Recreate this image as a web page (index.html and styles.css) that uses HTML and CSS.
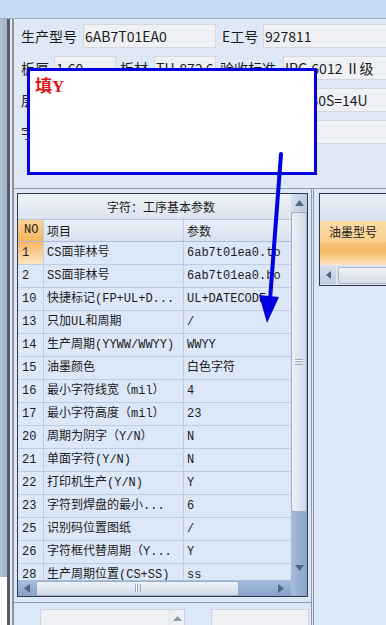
FILE: index.html
```html
<!doctype html>
<html>
  <head>
    <meta charset="utf-8">
    <title>字符工序参数</title>
    <link rel="stylesheet" href="styles.css">
  </head>
  <body>

    <div id="topbar"></div>

    <div id="main">
      <div id="side">
        <div class="side-panel"></div>
        <div class="side-dark"></div>
        <div class="side-light"></div>
      </div>

      <div id="content">
        <div id="form">
          <div class="frow">
            <span class="lbl w62">生产型号</span>
            <div class="tbox w133">6AB7T01EA0</div>
            <span class="lbl w47 pl6">E工号</span>
            <div class="tbox grow">927811</div>
          </div>
          <div class="frow">
            <span class="lbl w33">板厚</span>
            <div class="tbox w62">1.60</div>
            <span class="lbl w38 pl4">板材</span>
            <div class="tbox w62">TU-872 6</div>
            <span class="lbl w67 pl4">验收标准</span>
            <div class="tbox grow">IPC-6012 Ⅱ级</div>
          </div>
          <div class="frow">
            <span class="lbl w33">层数</span>
            <div class="tbox w62">4</div>
            <span class="lbl w38 pl4">铜厚</span>
            <div class="tbox w62">1OZ</div>
            <span class="lbl w67 pl4">字符规格</span>
            <div class="tbox grow">WL/30S=14U</div>
          </div>
          <div class="frow">
            <span class="lbl w33">字符</span>
            <div class="tbox grow"></div>
          </div>
        </div>

        <div id="lower">
          <div id="leftcol">
            <div class="grid-area">
              <div class="grid">
                <div class="grid-main">
                  <div class="g-caption">字符：工序基本参数</div>
                  <div class="g-body">
                    <div class="g-row g-head">
                      <div class="c-no">NO</div><div class="c-item">项目</div><div class="c-val">参数</div>
                    </div>
                    <div class="g-row">
                      <div class="c-no cur">1</div><div class="c-item">CS面菲林号</div><div class="c-val">6ab7t01ea0.to</div>
                    </div>
                    <div class="g-row">
                      <div class="c-no">2</div><div class="c-item">SS面菲林号</div><div class="c-val">6ab7t01ea0.bo</div>
                    </div>
                    <div class="g-row">
                      <div class="c-no">10</div><div class="c-item">快捷标记(FP+UL+D...</div><div class="c-val">UL+DATECODE</div>
                    </div>
                    <div class="g-row">
                      <div class="c-no">13</div><div class="c-item">只加UL和周期</div><div class="c-val">/</div>
                    </div>
                    <div class="g-row">
                      <div class="c-no">14</div><div class="c-item">生产周期(YYWW/WWYY)</div><div class="c-val">WWYY</div>
                    </div>
                    <div class="g-row">
                      <div class="c-no">15</div><div class="c-item">油墨颜色</div><div class="c-val">白色字符</div>
                    </div>
                    <div class="g-row">
                      <div class="c-no">16</div><div class="c-item">最小字符线宽（mil）</div><div class="c-val">4</div>
                    </div>
                    <div class="g-row">
                      <div class="c-no">17</div><div class="c-item">最小字符高度（mil）</div><div class="c-val">23</div>
                    </div>
                    <div class="g-row">
                      <div class="c-no">20</div><div class="c-item">周期为阴字（Y/N）</div><div class="c-val">N</div>
                    </div>
                    <div class="g-row">
                      <div class="c-no">21</div><div class="c-item">单面字符(Y/N)</div><div class="c-val">N</div>
                    </div>
                    <div class="g-row">
                      <div class="c-no">22</div><div class="c-item">打印机生产(Y/N)</div><div class="c-val">Y</div>
                    </div>
                    <div class="g-row">
                      <div class="c-no">23</div><div class="c-item">字符到焊盘的最小...</div><div class="c-val">6</div>
                    </div>
                    <div class="g-row">
                      <div class="c-no">25</div><div class="c-item">识别码位置图纸</div><div class="c-val">/</div>
                    </div>
                    <div class="g-row">
                      <div class="c-no">26</div><div class="c-item">字符框代替周期（Y...</div><div class="c-val">Y</div>
                    </div>
                    <div class="g-row">
                      <div class="c-no">28</div><div class="c-item">生产周期位置(CS+SS)</div><div class="c-val">ss</div>
                    </div>
                  </div>
                  <div class="hscroll">
                    <div class="hs-btn"><svg width="6" height="9"><polygon points="6,0 0,4.5 6,9" fill="#4f6584"/></svg></div>
                    <div class="hs-thumb"><span class="grip-v"></span></div>
                    <div class="hs-btn hs-right"><svg width="6" height="9"><polygon points="0,0 6,4.5 0,9" fill="#4f6584"/></svg></div>
                  </div>
                </div>
                <div class="vscroll">
                  <div class="vs-btn"><svg width="9" height="6"><polygon points="0,6 4.5,0 9,6" fill="#4f6584"/></svg></div>
                  <div class="vs-thumb"><span class="grip-h"></span></div>
                  <div class="vs-track"><svg width="9" height="6"><polygon points="0,0 9,0 4.5,6" fill="#4f6584"/></svg></div>
                </div>
              </div>
            </div>
            <div class="bottom-panel">
              <div class="tbox-lo w145">
                <div class="lo-btn"><svg width="9" height="5"><polygon points="0,5 4.5,0 9,5" fill="#8a98ac"/></svg></div>
              </div>
              <div class="tbox-lo w98 ml26"></div>
            </div>
          </div>

          <div id="rightcol">
            <div class="ink-box">
              <div class="ink-cap"></div>
              <div class="ink-head">油墨型号</div>
              <div class="ink-row"></div>
              <div class="ink-scroll">
                <div class="ink-btn"><svg width="5" height="8"><polygon points="5,0 0,4 5,8" fill="#4f6584"/></svg></div>
                <div class="ink-thumb"></div>
              </div>
            </div>
          </div>
        </div>
      </div>
    </div>

    <!-- note pasted over the form -->
    <div class="note"><span class="note-text">填Y</span></div>

    <svg class="arrow" width="386" height="625">
      <line x1="281" y1="154" x2="270" y2="300" stroke="#0000e0" stroke-width="4" stroke-linecap="round"/>
      <polygon points="259,295 279,297 267,323" fill="#0000e0"/>
    </svg>

  </body>
</html>
```

FILE: styles.css
```css
* { margin: 0; padding: 0; box-sizing: border-box; }
body { width: 386px; height: 625px; overflow: hidden; position: relative; background: #dce8f8; font: 14px "Noto Sans CJK SC", sans-serif; color: #1b1b1b; }

#topbar { height: 19px; background: #c7dcf4; border-bottom: 1px solid #9eabbd; }
#main { display: flex; height: 606px; }

#side { width: 12px; flex: none; display: flex; background: #fff; }
.side-panel { width: 7px; height: 558px; background: linear-gradient(to right, #b4c2d5, #a2b2c8); }
.side-dark { width: 3px; background: #555c66; }
.side-light { width: 2px; background: #e9ecf0; }

#content { flex: 1; min-width: 0; display: flex; flex-direction: column; border-left: 2px solid #8a929e; }

/* form at the top */
#form { flex: none; height: 169px; padding: 5px 0 0 7px; background: #dfe9f6; overflow: hidden; }
.frow { display: flex; height: 24px; margin-bottom: 8px; }
.lbl { flex: none; line-height: 24px; white-space: nowrap; }
.tbox { flex: none; height: 24px; border: 1px solid #d3d9e2; background: #eef0f3; padding-left: 1px; line-height: 22px; white-space: nowrap; overflow: hidden; }
.grow { flex: 1; margin-right: -3px; }
.w33 { width: 33px; }
.w38 { width: 38px; }
.w47 { width: 47px; }
.w62 { width: 62px; }
.w67 { width: 67px; }
.w133 { width: 133px; }
.pl4 { padding-left: 4px; }
.pl6 { padding-left: 6px; }

/* lower part: grid and side box */
#lower { flex: 1; min-height: 0; display: flex; border-top: 1px solid #8f99a8; }
#leftcol { width: 297px; flex: none; display: flex; flex-direction: column; }
.grid-area { flex: none; padding: 4px 3px 5px 3px; }
.grid { height: 404px; display: flex; border: 1px solid #2e3a4e; background: #dce8f8; }
.grid-main { width: 273px; display: flex; flex-direction: column; }
.g-caption { flex: none; height: 26px; border-bottom: 1px solid #b5c4d8; background: linear-gradient(#eef2f8, #dce4ef); font-size: 12px; line-height: 25px; padding-left: 89px; white-space: nowrap; }
.g-body { flex: 1; min-height: 0; overflow: hidden; }
.g-row { display: flex; height: 23px; border-bottom: 1px solid #bdcde2; font: 12px/22px "Liberation Mono", "Noto Sans CJK SC", monospace; white-space: nowrap; }
.c-no { flex: none; width: 26px; padding-left: 4px; border-right: 1px solid #bdcde2; }
.c-item { flex: none; width: 140px; padding-left: 3px; border-right: 1px solid #bdcde2; overflow: hidden; }
.c-val { flex: none; width: 200px; padding-left: 3px; }
.g-head { height: 22px; line-height: 21px; background: linear-gradient(#eaf0f8, #d7e1ee); border-bottom-color: #aebfd5; }
.g-head .c-no { background: linear-gradient(#fcd699, #f4b55c); padding-left: 6px; }
.g-head .c-item, .g-head .c-val { font-family: "Noto Sans CJK SC", sans-serif; }
.c-no.cur { background: linear-gradient(#f6b665, #fde4c0); }

.vscroll { width: 16px; display: flex; flex-direction: column; background: linear-gradient(to right, #a8bddc, #86a1ca); }
.vs-btn { height: 18px; display: flex; align-items: center; justify-content: center; background: linear-gradient(to right, #d6e0ee, #b9c9df); }
.vs-thumb { height: 300px; display: flex; align-items: center; justify-content: center; border: 1px solid #9cadc6; border-radius: 2px; background: linear-gradient(to right, #eef2f7, #d0dae8); }
.grip-h { width: 8px; height: 6px; border-top: 1px solid #9aa8bc; border-bottom: 1px solid #9aa8bc; box-shadow: inset 0 1px 0 #fff, inset 0 2px 0 #9aa8bc; }
.vs-track { flex: 1; display: flex; justify-content: center; padding-top: 53px; }

.hscroll { flex: none; height: 16px; display: flex; align-items: center; background: linear-gradient(#a8bddc, #86a1ca); }
.hs-btn { width: 18px; height: 16px; display: flex; align-items: center; justify-content: center; }
.hs-right { margin-left: auto; width: 20px; }
.hs-thumb { width: 203px; height: 15px; display: flex; align-items: center; justify-content: center; border: 1px solid #9cadc6; border-radius: 2px; background: linear-gradient(#eef2f7, #d0dae8); }
.grip-v { width: 6px; height: 8px; border-left: 1px solid #9aa8bc; border-right: 1px solid #9aa8bc; box-shadow: inset 1px 0 0 #fff, inset 2px 0 0 #9aa8bc; }

.bottom-panel { flex: 1; min-height: 0; overflow: hidden; display: flex; border-top: 1px solid #8e98a8; padding: 6px 0 0 26px; background: #dce8f8; }
.tbox-lo { flex: none; height: 30px; display: flex; justify-content: flex-end; border: 1px solid #cdd5e0; background: #eef0f3; }
.w145 { width: 145px; }
.w98 { width: 98px; }
.ml26 { margin-left: 26px; }
.lo-btn { width: 15px; height: 16px; display: flex; align-items: center; justify-content: center; border-left: 1px solid #dde3ea; }

#rightcol { flex: 1; min-width: 0; overflow: hidden; border-left: 3px double #8e98a8; padding: 4px 0 0 5px; }
.ink-box { width: 120px; height: 93px; display: flex; flex-direction: column; border: 1px solid #2e3a4e; background: #dce8f8; }
.ink-cap { height: 27px; background: linear-gradient(#eaf0f8, #d7e1ee); }
.ink-head { height: 21px; padding-left: 9px; font-size: 12px; line-height: 21px; background: linear-gradient(#fbdca8, #f8cf8e); }
.ink-row { height: 23px; background: linear-gradient(#f9c67e, #f6b864 40%, #fde3bd); }
.ink-scroll { flex: 1; display: flex; align-items: center; background: #dde5f0; }
.ink-btn { width: 16px; height: 18px; display: flex; align-items: center; justify-content: center; background: linear-gradient(#d6e0ee, #bccbdf); }
.ink-thumb { flex: 1; height: 17px; margin-left: 2px; border: 1px solid #a9b7cb; border-radius: 2px; background: linear-gradient(#f0f3f7, #d6dee9); }

/* pasted note and arrow */
.note { position: absolute; left: 27px; top: 68px; width: 290px; height: 107px; border: 3px solid #0000e0; background: #fff; padding: 5px 0 0 5px; }
.note-text { color: #e01515; font: bold 17px/20px "Liberation Serif", "Noto Sans CJK SC", serif; }
.arrow { position: absolute; left: 0; top: 0; }
```
